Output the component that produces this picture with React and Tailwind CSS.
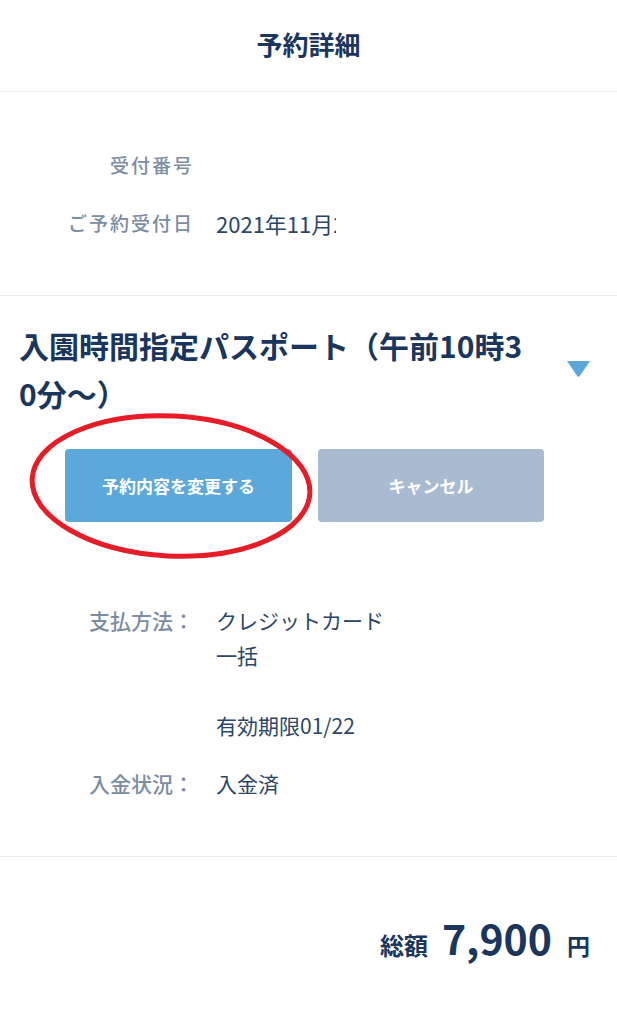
import React from "react";

export default function App() {
  return (
    <div className="relative w-full min-h-[1024px] bg-white font-['Noto_Sans_CJK_JP','Noto_Sans',sans-serif] text-[#2b4668]">
      <header className="h-[92px] flex items-center justify-center border-b border-[#e7ecf0]">
        <h1 className="text-[26px] font-bold leading-none text-[#1b365d] pb-[3px]">予約詳細</h1>
      </header>

      <section className="pt-[58px] pb-[57px] border-b border-[#e7ecf0]">
        <div className="grid grid-cols-[194px_1fr] gap-x-[22px] gap-y-[28px] leading-[30px]">
          <div className="text-right text-[19px] tracking-[2px] font-medium text-[#7b8da3]">受付番号</div>
          <div className="text-[22px]"></div>
          <div className="text-right text-[19px] tracking-[2px] font-medium text-[#7b8da3]">ご予約受付日</div>
          <div className="w-[120px] overflow-hidden whitespace-nowrap text-[22px]">2021年11月22日</div>
        </div>
      </section>

      <section className="pt-[25px] pb-[55px] border-b border-[#e7ecf0]">
        <div className="flex items-center pl-[19px] pr-[27px]">
          <h2 className="w-[511px] break-all text-[30px] leading-[48px] font-bold text-[#1b365d]">
            入園時間指定パスポート（午前10時30分～）
          </h2>
          <svg className="ml-auto" width="23" height="16" viewBox="0 0 23 16">
            <path d="M0 0 H23 L12.8 15 Q11.5 16.6 10.2 15 Z" fill="#5ba7d9" />
          </svg>
        </div>

        <div className="mt-[32px] flex pl-[65px] gap-[26px]">
          <button className="w-[227px] h-[73px] rounded-[4px] bg-[#5ca8da] text-white text-[17px] font-semibold">
            予約内容を変更する
          </button>
          <button className="w-[226px] h-[73px] rounded-[4px] bg-[#a8bbd0] text-white text-[17px] font-semibold">
            キャンセル
          </button>
        </div>

        <div className="mt-[81px] grid grid-cols-[194px_1fr] gap-x-[22px] gap-y-[23px] text-[21px] leading-[35px]">
          <div className="text-right font-medium text-[#7b8da3]">支払方法：</div>
          <div>
            <div>クレジットカード</div>
            <div>一括</div>
            <div className="h-[35px]"></div>
            <div>有効期限01/22</div>
          </div>
          <div className="text-right font-medium text-[#7b8da3]">入金状況：</div>
          <div>入金済</div>
        </div>
      </section>

      <section className="pt-[60px] pr-[27px] flex justify-end items-baseline text-[#1b365d] font-bold">
        <span className="text-[24px] leading-none">総額</span>
        <span className="ml-[14px] text-[41px] leading-none">7,900</span>
        <span className="ml-[15px] text-[23px] leading-none">円</span>
      </section>

      <svg
        className="absolute left-[25px] top-[408px] pointer-events-none"
        width="292"
        height="156"
        viewBox="0 0 292 156"
      >
        <ellipse
          cx="146"
          cy="78"
          rx="139"
          ry="70"
          fill="none"
          stroke="#e61d26"
          strokeWidth="5"
          transform="rotate(3 146 78)"
        />
      </svg>
    </div>
  );
}
